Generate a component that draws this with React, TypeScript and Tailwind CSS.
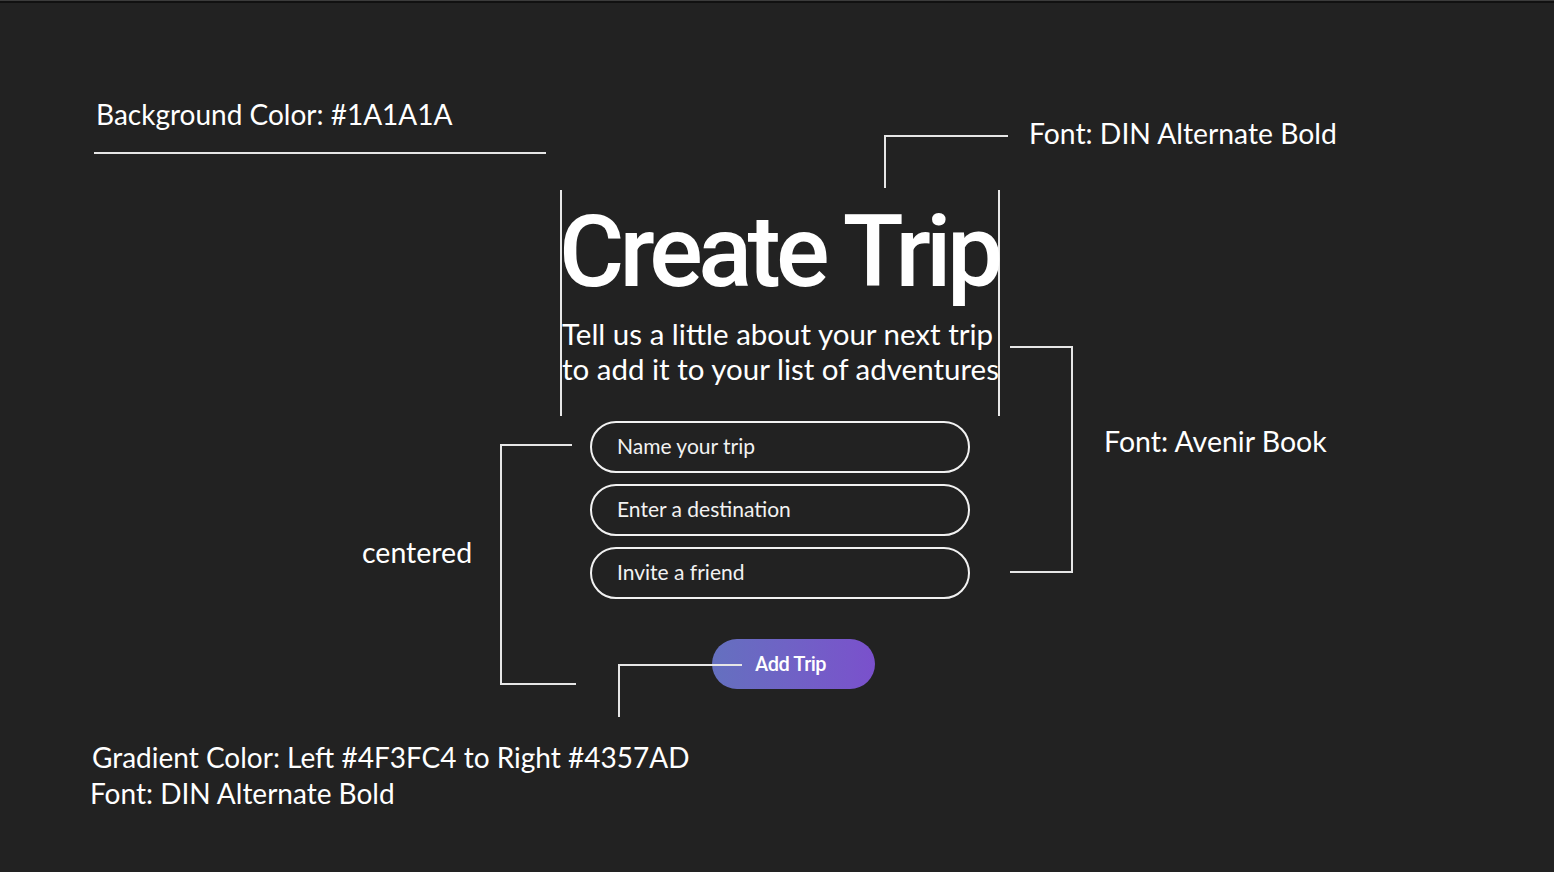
const avenir = { fontFamily: 'Lato, "Open Sans", sans-serif' };
const din = { fontFamily: 'Roboto, "Liberation Sans", sans-serif' };

function Field({ label }: { label: string }) {
  return (
    <div className="flex h-[52px] w-[380px] items-center rounded-full border-2 border-[#f2f2f2] pb-[3px] pl-[25px] text-[21px] leading-none text-[#f2f2f2]">
      {label}
    </div>
  );
}

export default function App() {
  return (
    <div className="relative h-[872px] w-full overflow-hidden bg-[#222222] text-white" style={avenir}>
      <div className="h-[1px] bg-[#3c3c3c]" />
      <div className="h-[2px] bg-[#111111]" />

      {/* the mock form */}
      <div className="ml-[560px] flex flex-col pt-[187px]">
        <div className="h-[226px] w-[440px] border-x-2 border-[#e8e8e8]">
          <h1 className="ml-[-3px] mt-[12px] whitespace-nowrap text-[100px] font-medium leading-none tracking-[-0.047em]" style={din}>
            Create Trip
          </h1>
          <p className="mt-[14px] whitespace-nowrap text-[29.5px] leading-[35px]">
            Tell us a little about your next trip
            <br />
            to add it to your list of adventures
          </p>
        </div>

        <div className="ml-[30px] mt-[5px] flex flex-col gap-[11px]">
          <Field label="Name your trip" />
          <Field label="Enter a destination" />
          <Field label="Invite a friend" />
        </div>

        <button
          className="ml-[152px] mt-[40px] flex h-[50px] w-[163px] items-center justify-center rounded-full bg-gradient-to-r from-[#6470bf] to-[#7a50cc] pr-[6px] text-[20px] font-medium tracking-tight text-white"
          style={din}
        >
          Add Trip
        </button>
      </div>

      {/* annotations */}
      <div className="absolute left-[94px] top-[100px] flex flex-col">
        <span className="ml-[2px] text-[28px] leading-none">Background Color: #1A1A1A</span>
        <div className="mt-[24px] h-[2px] w-[452px] bg-[#e6e6e6]" />
      </div>

      <div className="absolute left-[884px] top-[119px] flex items-start">
        <div className="mt-[16px] h-[53px] w-[124px] border-l-2 border-t-2 border-[#e6e6e6]" />
        <span className="ml-[21px] whitespace-nowrap text-[28.3px] leading-none">Font: DIN Alternate Bold</span>
      </div>

      <div className="absolute left-[1010px] top-[346px] flex items-start">
        <div className="h-[227px] w-[63px] border-y-2 border-r-2 border-[#e6e6e6]" />
        <span className="ml-[31px] mt-[81px] whitespace-nowrap text-[28.5px] leading-none">Font: Avenir Book</span>
      </div>

      <div className="absolute left-[362px] top-[444px] flex items-start">
        <span className="mt-[94px] w-[138px] text-[28.5px] leading-none">centered</span>
        <div className="flex flex-col">
          <div className="h-[239px] w-[72px] border-l-2 border-t-2 border-[#e6e6e6]" />
          <div className="h-[2px] w-[76px] bg-[#e6e6e6]" />
        </div>
      </div>

      <div className="absolute left-[618px] top-[664px] h-[53px] w-[124px] border-l-2 border-t-2 border-[#e6e6e6]" />

      <div className="absolute left-[90px] top-[743px] flex flex-col gap-[8px] text-[28px] leading-none">
        <span className="ml-[2px] whitespace-nowrap">Gradient Color: Left #4F3FC4 to Right #4357AD</span>
        <span className="whitespace-nowrap">Font: DIN Alternate Bold</span>
      </div>
    </div>
  );
}
